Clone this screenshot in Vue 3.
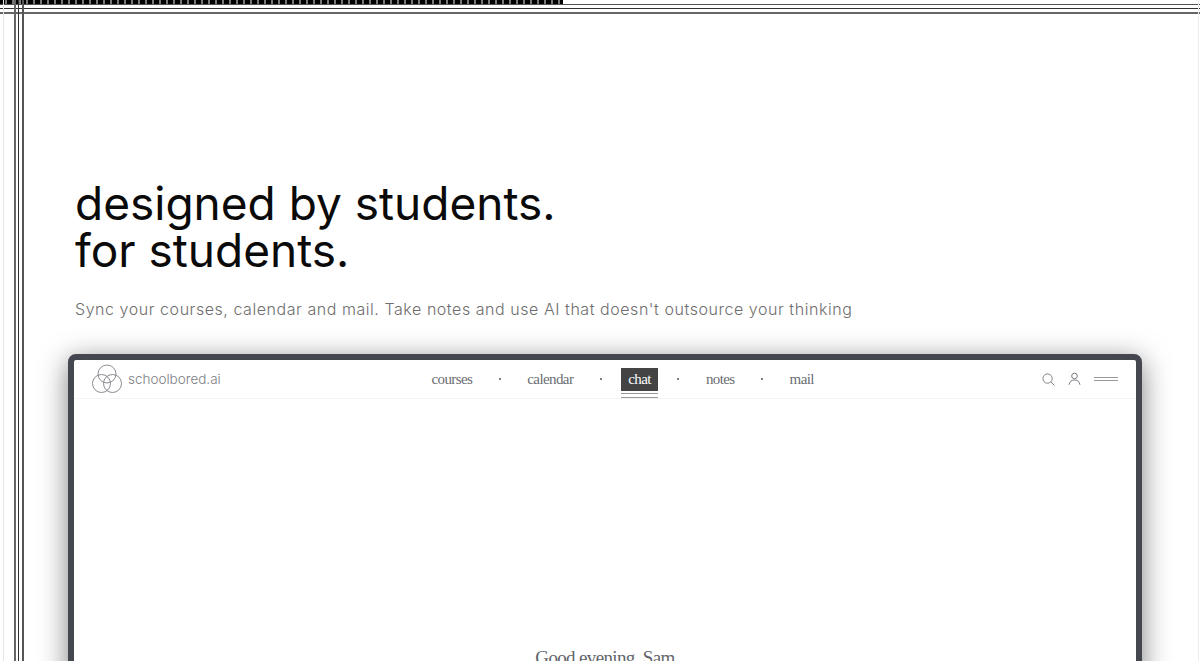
<template>
  <div class="page">
    <div class="rules-top">
      <div class="ticks"></div>
    </div>
    <div class="rules-left"></div>

    <section class="hero">
      <h1 class="title">designed by students.<br />for students.</h1>
      <p class="sub">Sync your courses, calendar and mail. Take notes and use AI that doesn't outsource your thinking</p>
    </section>

    <div class="window">
      <header class="bar">
        <div class="brand">
          <svg class="logo" width="30" height="30" viewBox="0 0 30 30" fill="none" stroke="#7d7f86" stroke-width="0.9">
            <circle cx="15" cy="10" r="9" />
            <circle cx="9.500" cy="19.500" r="9" />
            <circle cx="20.500" cy="19.500" r="9" />
          </svg>
          <span class="brand-name">schoolbored.ai</span>
        </div>

        <nav class="nav">
          <template v-for="(item, i) in links" :key="item">
            <span v-if="i > 0" class="dot"></span>
            <a :class="['link', { active: item === active }]">{{ item }}</a>
          </template>
        </nav>

        <div class="tools">
          <svg width="13" height="13" viewBox="0 0 14 14" fill="none" stroke="#777a80" stroke-width="1">
            <circle cx="6" cy="6" r="5" />
            <path d="M9.500 9.500 13.500 13.500" />
          </svg>
          <svg class="user" width="13" height="14" viewBox="0 0 13 14" fill="none" stroke="#777a80" stroke-width="1">
            <circle cx="6.500" cy="4" r="2.800" />
            <path d="M1 12.800C1.600 9.600 3.600 8 6.500 8s4.900 1.600 5.500 4.800" />
          </svg>
          <div class="menu"></div>
        </div>
      </header>

      <main class="body">
        <p class="greeting">Good evening, Sam</p>
      </main>
    </div>
  </div>
</template>

<script setup>
const links = ["courses", "calendar", "chat", "notes", "mail"];
const active = "chat";
</script>

<style>
html,
body {
  margin: 0;
  background: #fff;
  overflow: hidden;
}
</style>

<style scoped>
.page {
  position: relative;
  height: 661px;
  overflow: hidden;
  background: #fff;
  font-family: Inter, "Liberation Sans", sans-serif;
}

.rules-top {
  position: absolute;
  top: 0;
  left: 0;
  width: 100%;
  height: 14px;
  background:
    linear-gradient(#555, #555) 0 4px / 100% 1px no-repeat,
    linear-gradient(#333, #333) 0 8px / 100% 1px no-repeat,
    linear-gradient(#666, #666) 0 12px / 100% 2px no-repeat;
}

.ticks {
  width: 563px;
  height: 4px;
  background: repeating-linear-gradient(90deg, #000 0 5px, #777 5px 7px);
}

.rules-left {
  position: absolute;
  top: 0;
  left: 0;
  right: 0;
  height: 100%;
  background:
    linear-gradient(#e6e6e6, #e6e6e6) 3px 0 / 1px 100% no-repeat,
    linear-gradient(#666, #666) 14px 0 / 2px 100% no-repeat,
    linear-gradient(#333, #333) 18px 0 / 1px 100% no-repeat,
    linear-gradient(#555, #555) 22px 0 / 2px 100% no-repeat,
    linear-gradient(#ececec, #ececec) 1198px 0 / 1px 100% no-repeat;
}

.hero {
  padding: 180px 0 0 75px;
}

.title {
  margin: 0;
  font-size: 46px;
  line-height: 47px;
  font-weight: 400;
  color: #0a0a0a;
}

.sub {
  margin: 23px 0 0;
  font-size: 16px;
  line-height: 24px;
  font-weight: 300;
  letter-spacing: 0.55px;
  color: #6e6e6e;
}

.window {
  margin: 33px 58px 0 68px;
  height: 400px;
  box-sizing: border-box;
  border: 6px solid #44474f;
  border-radius: 8px;
  background: #fff;
  box-shadow: 0 6px 28px rgba(0, 0, 0, 0.5);
}

.bar {
  display: grid;
  grid-template-columns: 332px auto 1fr;
  align-items: center;
  height: 38px;
  padding: 0 18px;
  border-bottom: 1px solid #f5f5f5;
}

.brand {
  display: flex;
  align-items: center;
  gap: 6px;
}

.brand-name {
  font-size: 13.5px;
  font-weight: 300;
  color: #7c7e84;
}

.nav {
  display: flex;
  align-items: center;
  gap: 19px;
  font-family: "Liberation Serif", serif;
  font-size: 15px;
  letter-spacing: -0.6px;
  color: #6a6d73;
}

.dot {
  width: 2px;
  height: 2px;
  border-radius: 50%;
  background: #555;
}

.link {
  position: relative;
  padding: 3px 7.5px;
}

.link.active {
  background: #444;
  color: #fff;
}

.link.active::after {
  content: "";
  position: absolute;
  left: 0;
  right: 0;
  bottom: -7px;
  height: 5px;
  border-top: 1px solid #999;
  border-bottom: 1px solid #999;
  box-sizing: border-box;
}

.tools {
  display: flex;
  justify-content: flex-end;
  align-items: center;
  gap: 13px;
}

.menu {
  width: 24px;
  height: 4px;
  box-sizing: border-box;
  border-top: 1px solid #999;
  border-bottom: 1px solid #999;
}

.body {
  padding-top: 247px;
  text-align: center;
}

.greeting {
  margin: 0;
  font-family: "Liberation Serif", serif;
  font-size: 19px;
  line-height: 24px;
  letter-spacing: -0.65px;
  color: #62656b;
}
</style>
